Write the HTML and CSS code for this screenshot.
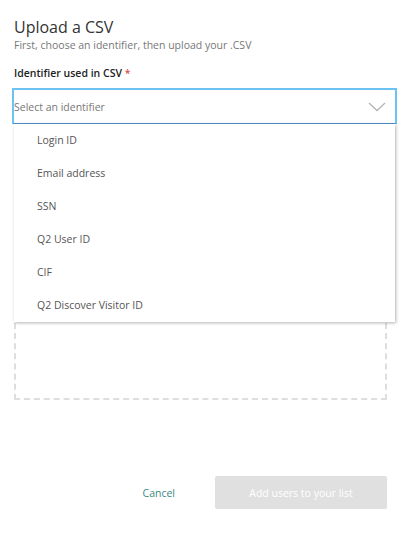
FILE: index.html
```html
<!DOCTYPE html>
<html>
<head>
<meta charset="utf-8">
<link rel="stylesheet" href="styles.css">
</head>
<body>
<div class="page">
  <h1 class="title">Upload a CSV</h1>
  <p class="subtitle">First, choose an identifier, then upload your .CSV</p>
  <div class="label">Identifier used in CSV <span class="req">*</span></div>
  <div class="field">
    <div class="select">
      <span class="placeholder">Select an identifier</span>
      <svg class="chev" width="18" height="10" viewBox="0 0 18 10"><path d="M1 1 L9 8.5 L17 1" fill="none" stroke="#b5b5b5" stroke-width="1.3"/></svg>
    </div>
    <ul class="menu">
      <li>Login ID</li>
      <li>Email address</li>
      <li>SSN</li>
      <li>Q2 User ID</li>
      <li>CIF</li>
      <li>Q2 Discover Visitor ID</li>
    </ul>
    <div class="dropzone"></div>
  </div>
  <div class="actions">
    <a class="cancel">Cancel</a>
    <button class="submit" disabled>Add users to your list</button>
  </div>
</div>
</body>
</html>
```
FILE: styles.css
```css
html, body { margin: 0; padding: 0; background: #fff; }
body { font-family: "Open Sans", "Noto Sans", sans-serif; color: #333; }
.page { padding: 16px 11px 0 14px; width: 408px; box-sizing: border-box; }
.title { font-size: 16px; font-weight: 400; margin: 0; line-height: 22px; color: #333; }
.subtitle { font-size: 10.5px; color: #777; margin: 0; line-height: 14px; }
.label { margin-top: 14px; font-size: 10.5px; font-weight: 600; color: #222; line-height: 14px; }
.req { color: #d9534f; }
.field { position: relative; margin-top: 8px; margin-left: -2px; }
.select { height: 36px; box-sizing: border-box; border: 2px solid #6cc3f2; border-bottom: 1px solid #4f8fcf; display: flex; align-items: center; justify-content: space-between; padding: 0 8px 0 0; }
.placeholder { font-size: 10.5px; color: #777; }
.chev { margin-right: 1px; }
.menu { position: absolute; left: 2px; top: 36px; width: 381px; margin: 0; padding: 0; list-style: none; background: #fff; box-shadow: 1px 1px 3px rgba(0,0,0,0.3); z-index: 2; }
.menu li { height: 33px; line-height: 33px; padding-left: 23px; font-size: 10.5px; color: #555; }
.dropzone { margin: 16px 10px 0 2px; height: 260px; box-sizing: border-box; border: 2px dashed #dedede; }
.actions { display: flex; justify-content: flex-end; align-items: center; margin-top: 76px; gap: 40px; padding-right: 10px; }
.cancel { font-size: 10.5px; color: #3b8a7d; }
.submit { width: 172px; height: 33px; border: none; border-radius: 2px; background: #e0e0e0; color: #fff; font-family: "Open Sans", sans-serif; font-size: 10.5px; }
```
